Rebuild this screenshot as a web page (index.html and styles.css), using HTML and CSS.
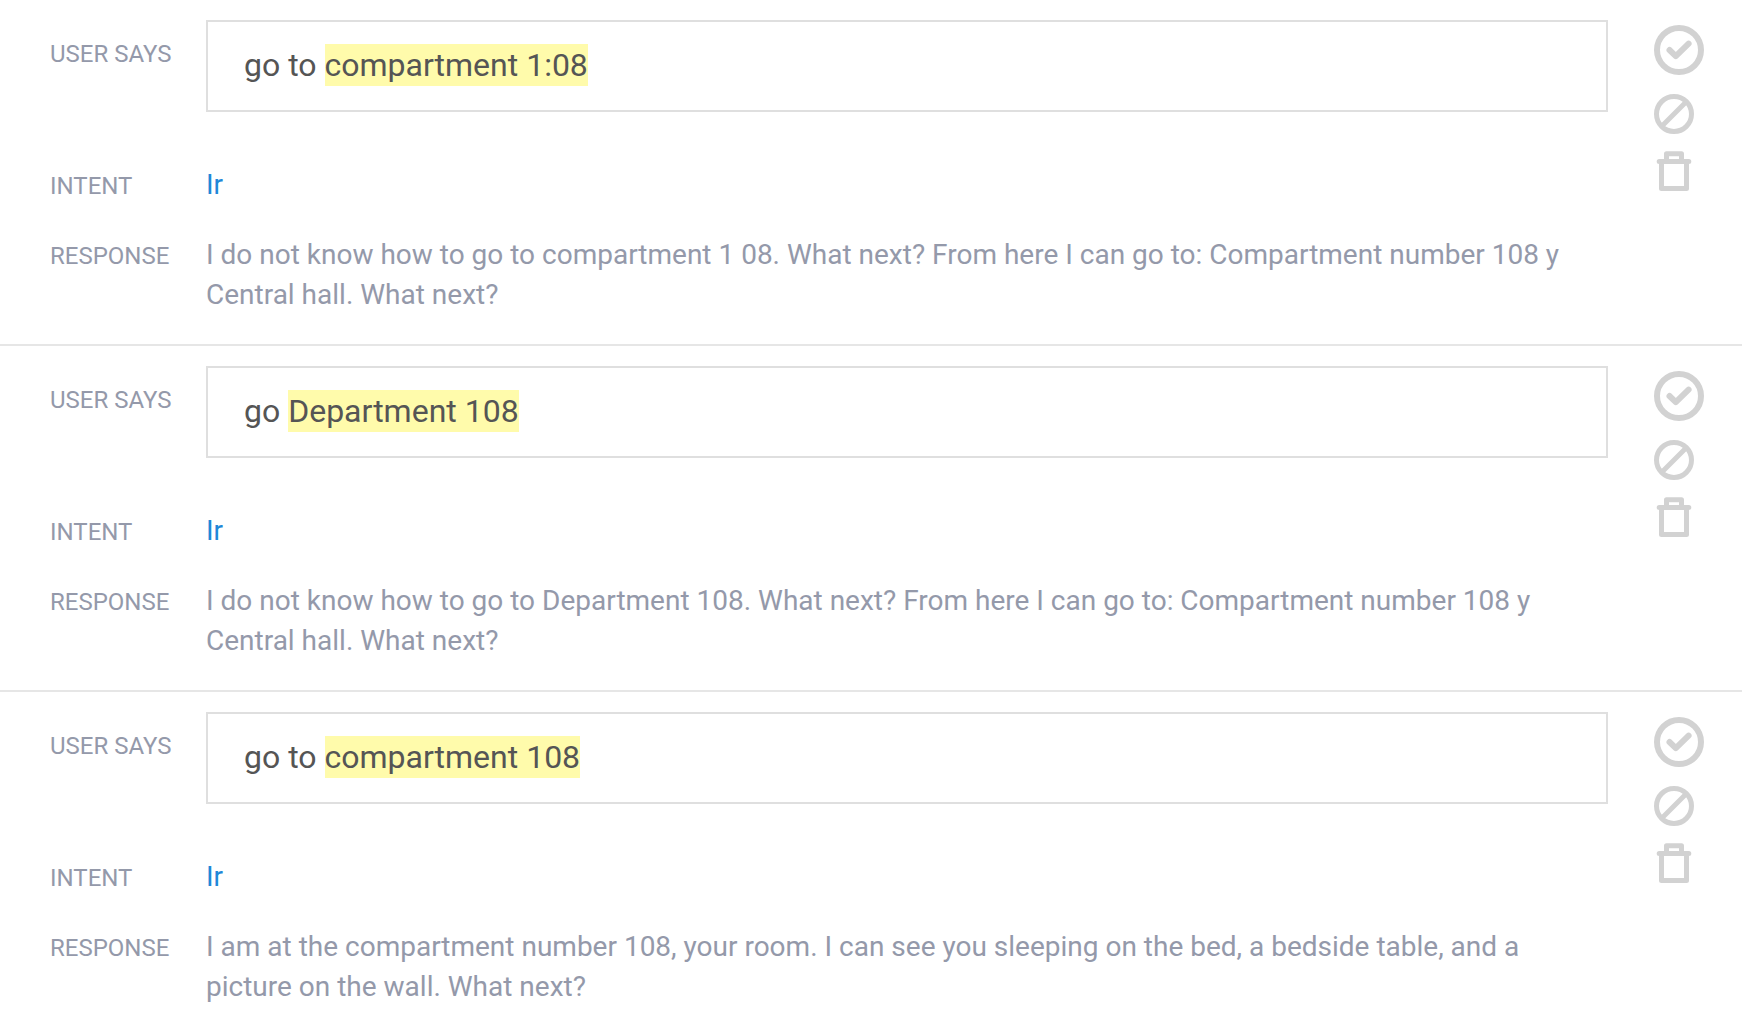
FILE: index.html
```html
<!DOCTYPE html>
<html lang="en">
<head>
<meta charset="utf-8">
<title>Training</title>
<link rel="stylesheet" href="styles.css">
</head>
<body>
<svg class="sprite" aria-hidden="true">
<symbol id="check" viewBox="0 0 50 50"><g fill="none" stroke="currentColor" stroke-width="6" stroke-linecap="round" stroke-linejoin="round"><circle cx="25" cy="25" r="22"/><path d="M15.5 25l6.3 6.2L34.6 18.6"/></g></symbol>
<symbol id="ban" viewBox="0 0 40 40"><g fill="none" stroke="currentColor" stroke-width="5"><circle cx="20" cy="20" r="17.5"/><path d="M8 32L32 8"/></g></symbol>
<symbol id="trash" viewBox="0 0 40 40"><g fill="none" stroke="currentColor" stroke-width="5" stroke-linecap="round" stroke-linejoin="round"><path d="M5.2 10.5H34.8M12.5 10V2.8H27.5V10M7.5 11V37.5H32.5V11"/></g></symbol>
</svg>
<main>
<section class="entry">
<span class="label says" id="says1">USER SAYS</span>
<div class="query" role="textbox" contenteditable="true" spellcheck="false" aria-labelledby="says1">go to <mark>compartment 1:08</mark></div>
<span class="label">INTENT</span><a class="value link" href="#">Ir</a>
<span class="label">RESPONSE</span><p class="value">I do not know how to go to compartment 1 08. What next? From here I can go to: Compartment number 108 y Central hall. What next?</p>
<div class="actions"><button class="approve" aria-label="Approve"><svg><use href="#check"/></svg></button><button aria-label="Ignore"><svg><use href="#ban"/></svg></button><button aria-label="Delete"><svg><use href="#trash"/></svg></button></div>
</section>
<section class="entry">
<span class="label says" id="says2">USER SAYS</span>
<div class="query" role="textbox" contenteditable="true" spellcheck="false" aria-labelledby="says2">go <mark>Department 108</mark></div>
<span class="label">INTENT</span><a class="value link" href="#">Ir</a>
<span class="label">RESPONSE</span><p class="value">I do not know how to go to Department 108. What next? From here I can go to: Compartment number 108 y Central hall. What next?</p>
<div class="actions"><button class="approve" aria-label="Approve"><svg><use href="#check"/></svg></button><button aria-label="Ignore"><svg><use href="#ban"/></svg></button><button aria-label="Delete"><svg><use href="#trash"/></svg></button></div>
</section>
<section class="entry">
<span class="label says" id="says3">USER SAYS</span>
<div class="query" role="textbox" contenteditable="true" spellcheck="false" aria-labelledby="says3">go to <mark>compartment 108</mark></div>
<span class="label">INTENT</span><a class="value link" href="#">Ir</a>
<span class="label">RESPONSE</span><p class="value">I am at the compartment number 108, your room. I can see you sleeping on the bed, a bedside table, and a picture on the wall. What next?</p>
<div class="actions"><button class="approve" aria-label="Approve"><svg><use href="#check"/></svg></button><button aria-label="Ignore"><svg><use href="#ban"/></svg></button><button aria-label="Delete"><svg><use href="#trash"/></svg></button></div>
</section>
</main>
</body>
</html>
```
FILE: styles.css
```css
* { box-sizing: border-box; }
html { scrollbar-width: none; }
body { margin: 0; background: #fff; font-family: Roboto, sans-serif; color: #9499aa; }
.sprite { display: none; }
.entry {
  display: grid;
  grid-template-columns: 156px minmax(0, 1fr) 88px;
  row-gap: 29px;
  align-items: baseline;
  padding: 20px 0 29px 50px;
  border-bottom: 2px solid #e6e6e6;
}
.label { grid-column: 1; font-size: 24px; line-height: 40px; }
.says { align-self: start; padding-top: 14px; }
.value { grid-column: 2; margin: 0; padding-right: 46px; font-size: 28px; line-height: 40px; }
.link { justify-self: start; padding: 0; color: #1f88d8; text-decoration: none; }
.query {
  grid-column: 2;
  align-self: start;
  margin: 0 46px 24px 0;
  border: 2px solid #dfdfdf;
  padding: 22px 36px 24px;
  font-size: 32px;
  line-height: 42px;
  color: #555;
}
mark { padding: 2px 0; background: #fffbab; color: inherit; }
.actions {
  grid-column: 3;
  grid-row: 1 / 4;
  align-self: start;
  display: flex;
  flex-direction: column;
  align-items: flex-start;
  gap: 17px;
  padding-top: 5px;
  color: #d2d2d2;
}
button { width: 40px; height: 40px; padding: 0; border: 0; background: none; color: inherit; cursor: pointer; }
button.approve { width: 50px; height: 50px; margin-bottom: 2px; }
button svg { display: block; width: 100%; height: 100%; }
```
